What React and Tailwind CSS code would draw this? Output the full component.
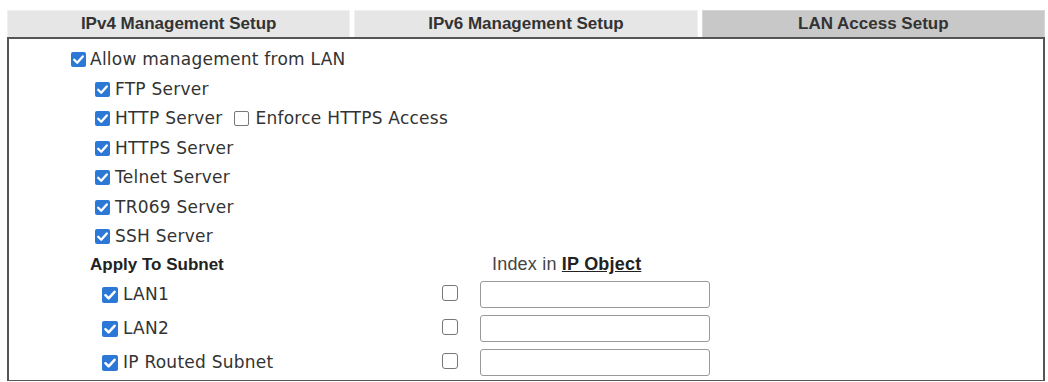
import React from 'react';

const body = { fontFamily: '"DejaVu Sans", Verdana, sans-serif' };
const arial = { fontFamily: '"Liberation Sans", Arial, sans-serif' };

const Box = ({ checked, size = 'w-[15px] h-[15px]' }) =>
  checked ? (
    <span className={`${size} shrink-0 rounded-[2px] bg-[#2b78d6] flex items-center justify-center`}>
      <svg viewBox="0 0 14 14" className="w-full h-full">
        <path d="M3 7.2 L5.8 10 L11 4.2" fill="none" stroke="#fff" strokeWidth="2.2" strokeLinecap="round" strokeLinejoin="round" />
      </svg>
    </span>
  ) : (
    <span className={`${size} shrink-0 rounded-[2px] border border-[#777] bg-white`} />
  );

const services = ['FTP Server', 'HTTP Server', 'HTTPS Server', 'Telnet Server', 'TR069 Server', 'SSH Server'];
const subnets = ['LAN1', 'LAN2', 'IP Routed Subnet'];

export default function App() {
  const tabs = [
    { label: 'IPv4 Management Setup', active: false },
    { label: 'IPv6 Management Setup', active: false },
    { label: 'LAN Access Setup', active: true },
  ];

  return (
    <div className="bg-white w-[1048px] h-[382px] pl-[7px] pt-[10px]">
      <div className="flex gap-[4px] w-[1038px]">
        {tabs.map((t) => (
          <div
            key={t.label}
            style={arial}
            className={`flex-1 h-[27px] flex items-center justify-center text-[17px] font-bold text-[#333] border-t border-x ${
              t.active ? 'bg-[#c8c8c8] border-[#d6d6d6]' : 'bg-[#e6e6e6] border-[#f0f0f0]'
            }`}
          >
            {t.label}
          </div>
        ))}
      </div>

      <div className="w-[1038px] h-[344px] border-t-2 border-x-2 border-b border-[#555] pt-[6px] text-[17px] text-[#333] tracking-[0.25px]" style={body}>
        <div className="h-[29.5px] flex items-center pl-[62px] gap-[4px]">
          <Box checked />
          <span>Allow management from LAN</span>
        </div>
        {services.map((s) => (
          <div key={s} className="h-[29.5px] flex items-center pl-[86px] gap-[5px]">
            <Box checked />
            <span>{s}</span>
            {s === 'HTTP Server' && (
              <span className="flex items-center gap-[6px] ml-[7px]">
                <Box />
                <span>Enforce HTTPS Access</span>
              </span>
            )}
          </div>
        ))}

        <div className="h-[26px] flex items-center tracking-normal">
          <div className="w-[433px] pl-[81px] font-bold text-[17px] text-[#222]" style={arial}>
            Apply To Subnet
          </div>
          <div className="ml-[50px] text-[18px] text-[#444] tracking-[0.2px]" style={arial}>
            Index in <span className="font-bold underline text-[#222]">IP Object</span>
          </div>
        </div>

        {subnets.map((n) => (
          <div key={n} className="h-[34px] flex items-center">
            <div className="w-[433px] pl-[93px] flex items-center gap-[5px]">
              <Box checked size="w-[16px] h-[16px]" />
              <span>{n}</span>
            </div>
            <span className="w-[16px] h-[16px] rounded-[3px] border border-[#777] bg-white -mt-[4px]" />
            <input
              type="text"
              className="ml-[22px] w-[230px] h-[27px] rounded-[3px] border border-[#999] bg-white outline-none"
            />
          </div>
        ))}
      </div>
    </div>
  );
}
